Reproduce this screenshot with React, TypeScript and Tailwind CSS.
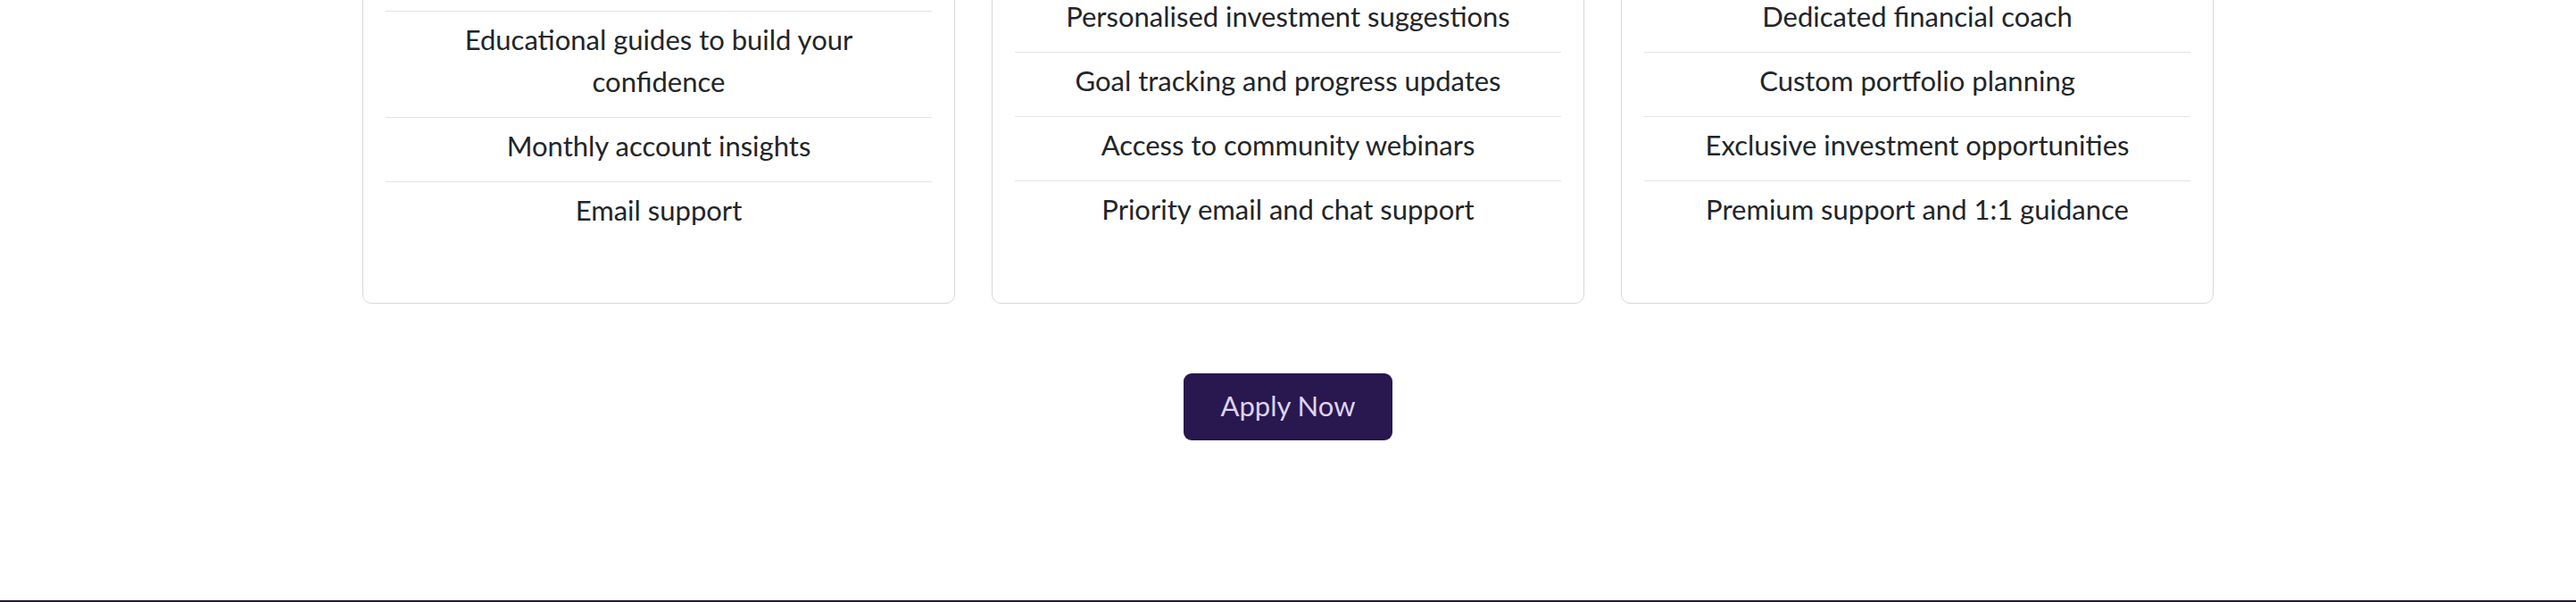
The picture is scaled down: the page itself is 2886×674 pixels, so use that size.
const plans = [
  {
    lead: null,
    items: [
      ["Educational guides to build your", "confidence"],
      ["Monthly account insights"],
      ["Email support"],
    ],
  },
  {
    lead: "Personalised investment suggestions",
    items: [
      ["Goal tracking and progress updates"],
      ["Access to community webinars"],
      ["Priority email and chat support"],
    ],
  },
  {
    lead: "Dedicated financial coach",
    items: [
      ["Custom portfolio planning"],
      ["Exclusive investment opportunities"],
      ["Premium support and 1:1 guidance"],
    ],
  },
];

export default function App() {
  return (
    <div
      className="flex h-[674px] flex-col overflow-hidden bg-white text-[#212529]"
      style={{ fontFamily: "Lato, 'Noto Sans', sans-serif" }}
    >
      {/* Plan cards, scrolled so their tops are above the fold */}
      <div className="mx-auto -mt-[14px] grid w-[2074px] grid-cols-3 gap-[41px]">
        {plans.map((plan, i) => (
          <div
            key={i}
            className="rounded-[10px] border border-[#d8d8d8] px-[25px] pb-[64px]"
          >
            {plan.lead ? (
              <div className="pt-[8px] pb-[16px] text-center text-[31px] leading-[47px]">
                {plan.lead}
              </div>
            ) : (
              <div className="h-[25px]" />
            )}
            {plan.items.map((lines, j) => (
              <div
                key={j}
                className="border-t border-[#e4e4e4] pt-[8px] pb-[16px] text-center text-[31px] leading-[47px]"
              >
                {lines.map((l, k) => (
                  <div key={k}>{l}</div>
                ))}
              </div>
            ))}
          </div>
        ))}
      </div>

      <div className="mt-[78px] flex justify-center">
        <button className="h-[75px] w-[234px] rounded-[9px] bg-[#29174f] pb-[3px] text-[31px] text-[#ddd3f2]">
          Apply Now
        </button>
      </div>

      <div className="flex-1" />
      <div className="h-[2px] shrink-0 bg-[#231640]" />
    </div>
  );
}
